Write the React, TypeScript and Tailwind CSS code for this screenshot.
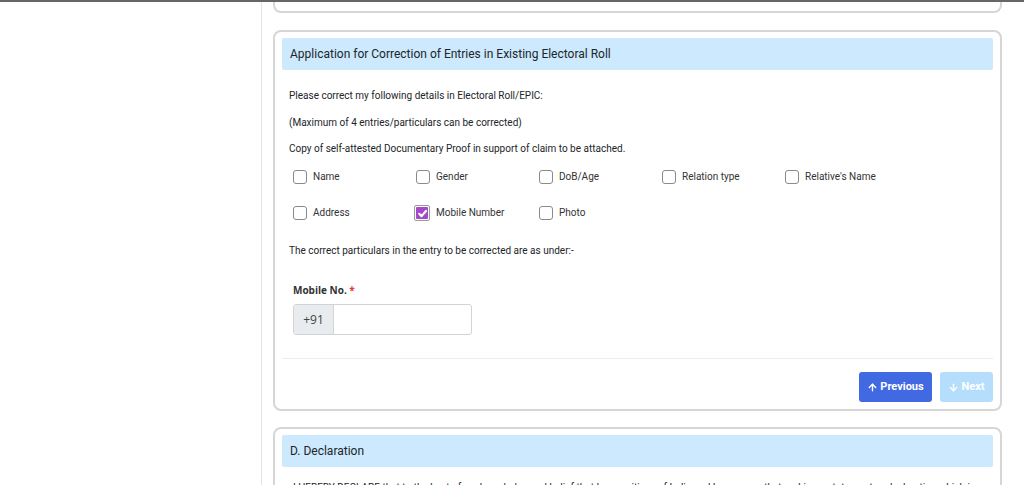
import { ArrowUp, ArrowDown } from 'lucide-react';

const options = [
  { label: 'Name', checked: false },
  { label: 'Gender', checked: false },
  { label: 'DoB/Age', checked: false },
  { label: 'Relation type', checked: false },
  { label: "Relative's Name", checked: false },
  { label: 'Address', checked: false },
  { label: 'Mobile Number', checked: true },
  { label: 'Photo', checked: false },
];

const CheckItem = ({ label, checked }: { label: string; checked: boolean }) => (
  <label className="flex items-center gap-[6px] h-[18px]">
    {checked ? (
      <span className="w-[16px] h-[16px] -ml-[2px] rounded-[2px] border border-[#9a9a9a] p-[1px] flex">
        <span className="flex-1 bg-[#a548c9] rounded-[1px] flex items-center justify-center">
          <svg width="11" height="11" viewBox="0 0 10 10" fill="none">
            <path d="M2 5.3 L4.1 7.4 L8.2 2.7" stroke="#fff" strokeWidth="2" strokeLinecap="round" strokeLinejoin="round" />
          </svg>
        </span>
      </span>
    ) : (
      <span className="w-[14px] h-[14px] rounded-[3px] border border-[#8a8a8a] bg-white" />
    )}
    <span className="text-[10px] text-[#333]">{label}</span>
  </label>
);

const App = () => {
  return (
    <div className="w-[1024px] h-[485px] overflow-hidden bg-white font-['Roboto',sans-serif] text-[#212529]">
      <div className="h-[2px] bg-[#666]" />
      <div className="flex h-[483px]">
        {/* left sidebar */}
        <div className="w-[262px] shrink-0 border-r border-[#e3e3e3]" />

        {/* main column */}
        <div className="flex-1 min-w-0 pl-[11px] pr-[22px]">
          {/* previous card tail */}
          <div className="h-[11px] border-x-2 border-b-2 border-[#d6d6d6] rounded-b-[8px]" />

          {/* correction card */}
          <div className="mt-[17px] border-2 border-[#d6d6d6] rounded-[8px] px-[7px] pt-[6px] pb-[7px]">
            <div className="h-[32px] bg-[#cce9fd] rounded-[2px] flex items-center px-[8px]">
              <h2 className="text-[12px] text-[#212529]">Application for Correction of Entries in Existing Electoral Roll</h2>
            </div>

            <div className="px-[7px] pt-[19px] text-[10px] leading-[14px] text-[#212529]">
              <p className="mb-[13px]">Please correct my following details in Electoral Roll/EPIC:</p>
              <p className="mb-[12px]">(Maximum of 4 entries/particulars can be corrected)</p>
              <p className="mb-[12px]">Copy of self-attested Documentary Proof in support of claim to be attached.</p>

              <div className="pl-[4px] grid grid-cols-[123px_123px_123px_123px_123px] gap-y-[18px]">
                {options.map((o) => (
                  <CheckItem key={o.label} label={o.label} checked={o.checked} />
                ))}
              </div>

              <p className="mt-[22px]">The correct particulars in the entry to be corrected are as under:-</p>

              <div className="pl-[4px] mt-[25px]">
                <div className="font-['Open_Sans',sans-serif] font-bold text-[10px] leading-[14px] text-[#333]">
                  Mobile No. <span className="text-[#e53935]">*</span>
                </div>
                <div className="mt-[7px] flex w-[179px] h-[31px] border border-[#d0d4d8] rounded-[3px] overflow-hidden">
                  <span className="w-[40px] shrink-0 bg-[#e9ecef] border-r border-[#d0d4d8] flex items-center justify-center font-['Open_Sans',sans-serif] text-[12px] text-[#444]">
                    +91
                  </span>
                  <input className="flex-1 min-w-0 outline-none px-2 text-[12px]" />
                </div>
              </div>
            </div>

            <div className="mt-[23px] border-t border-[#ececec]" />

            <div className="flex justify-end gap-[8px] pt-[13px]">
              <button className="w-[73px] h-[30px] rounded-[3px] bg-[#4169e1] text-white text-[11px] font-bold flex items-center justify-center gap-[2px]">
                <ArrowUp size={11} strokeWidth={3} />
                Previous
              </button>
              <button className="w-[53px] h-[30px] rounded-[3px] bg-[#b5defc] text-white text-[11px] font-bold flex items-center justify-center gap-[2px]">
                <ArrowDown size={11} strokeWidth={3} />
                Next
              </button>
            </div>
          </div>

          {/* declaration card */}
          <div className="mt-[16px] border-2 border-[#d6d6d6] rounded-[8px] px-[7px] pt-[6px]">
            <div className="h-[32px] bg-[#cce9fd] rounded-[2px] flex items-center px-[8px]">
              <h2 className="text-[12px] text-[#212529]">D. Declaration</h2>
            </div>
            <p className="pl-[11px] pr-[7px] pt-[14px] text-[10px] leading-[14px] whitespace-nowrap overflow-hidden">
              I HEREBY DECLARE that to the best of my knowledge and belief that I am a citizen of India and I am aware that making a statement or declaration which is
            </p>
          </div>
        </div>
      </div>
    </div>
  );
};

export default App;
